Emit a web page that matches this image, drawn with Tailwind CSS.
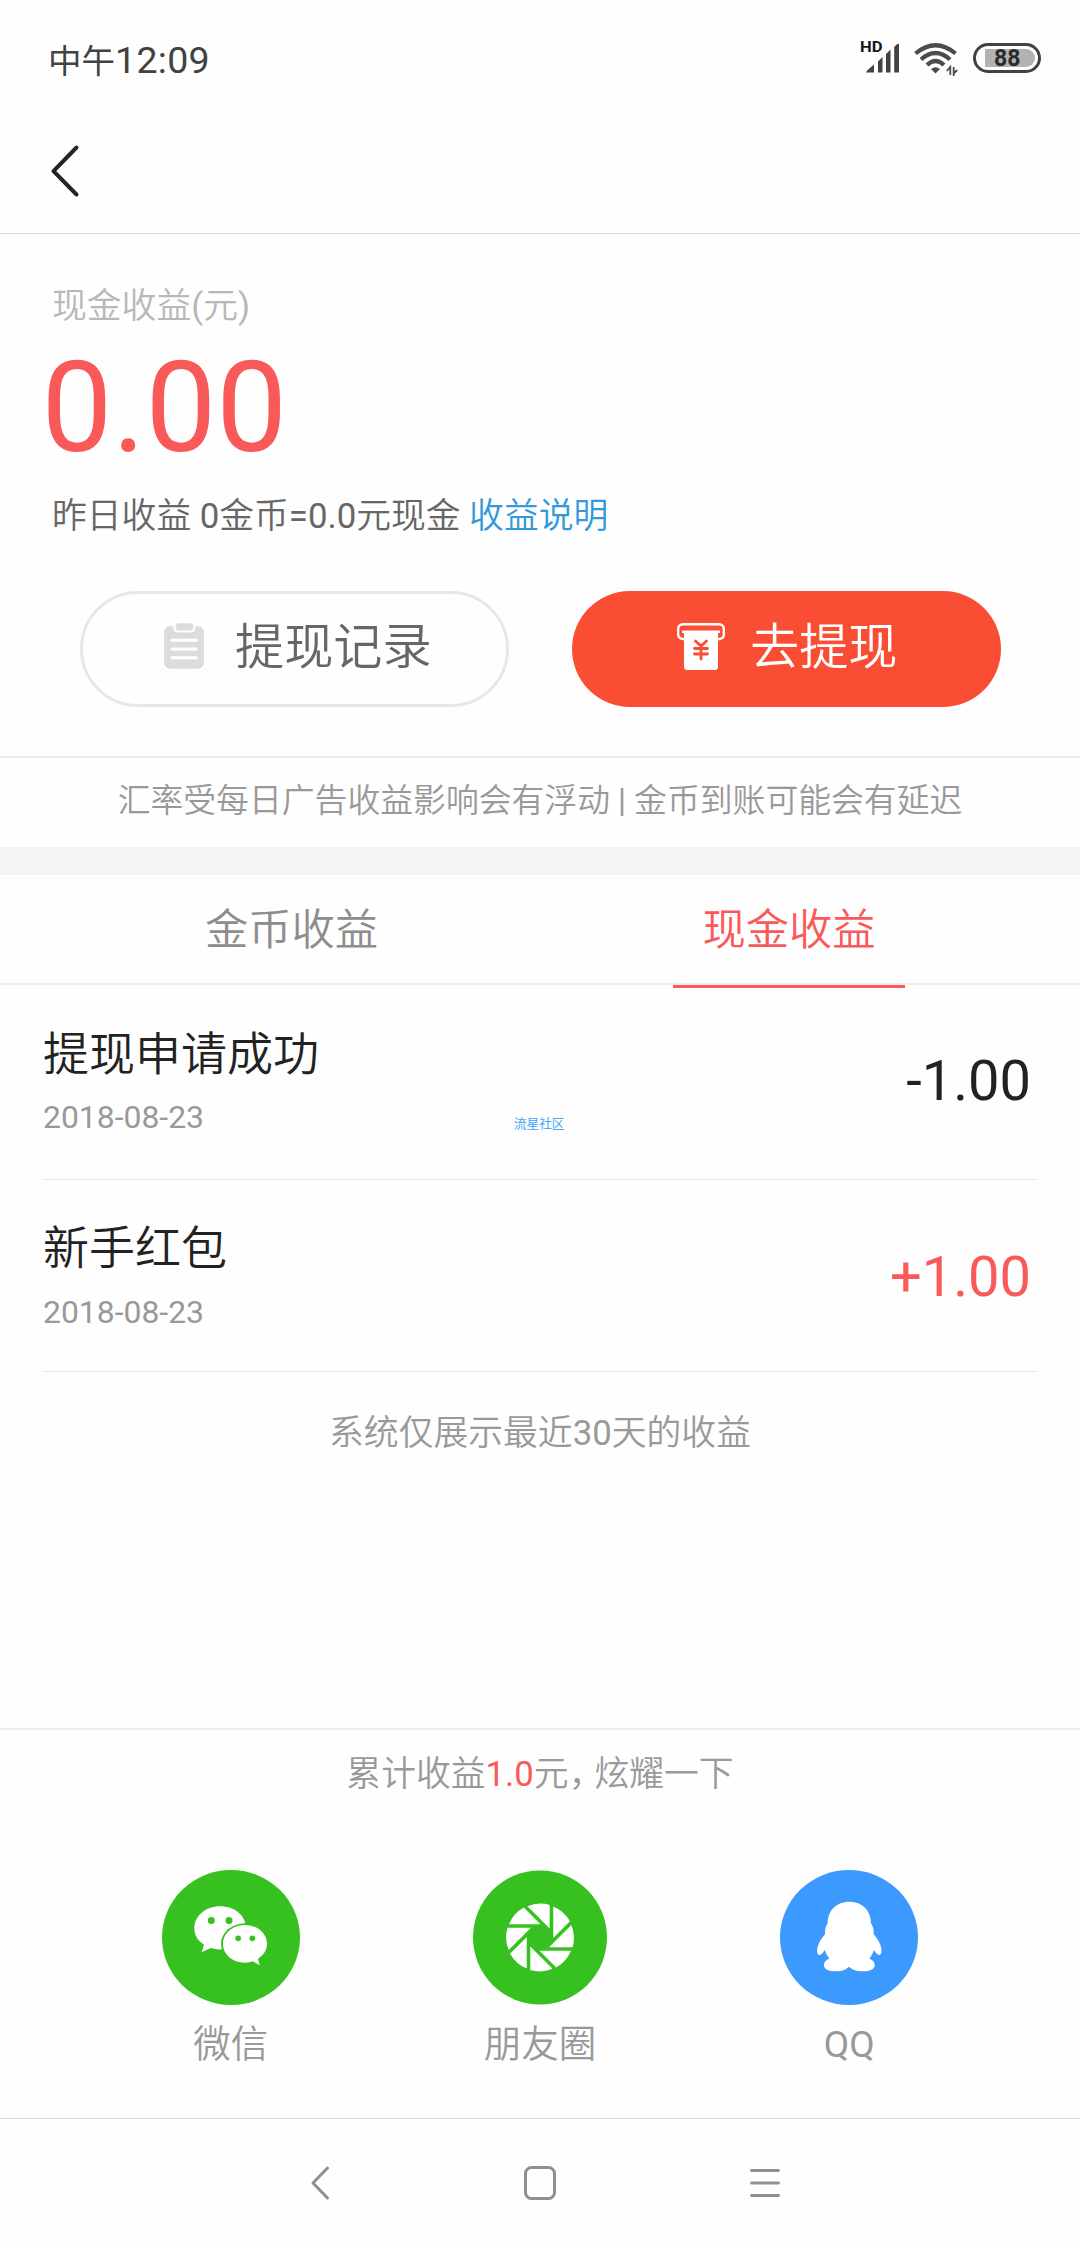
<!DOCTYPE html>
<html lang="zh-CN">
<head>
<meta charset="utf-8">
<title>现金收益</title>
<script src="https://cdn.jsdelivr.net/npm/@tailwindcss/browser@4"></script>
</head>
<body class="bg-[#fefefe]">
<div class="relative flex h-[2248px] w-[1080px] flex-col overflow-hidden bg-[#fefefe] font-[Roboto,'Noto_Sans_CJK_SC',sans-serif] font-[350] whitespace-nowrap text-[#999]">

  <!-- Status bar -->
  <div class="flex h-[118px] shrink-0 items-center justify-between pr-[39px] pl-12 font-normal text-[#424242]">
    <div class="pt-0.5 text-[37.500px] tracking-[0.300px]"><span class="text-[33.500px] tracking-normal">中午</span>12:09</div>
    <div class="flex items-center pb-0.5">
      <svg class="h-[40px] w-[44px]" viewBox="-2 0 44 40" fill="#424242">
        <text x="-1" y="14" font-size="15.500" font-weight="700" textLength="22.500" lengthAdjust="spacingAndGlyphs" fill="#151515">HD</text>
        <path d="M5 34.500Q5 33 13 26.500V34.500ZM17 23.500l4.500-4.500V34.500H17ZM25 16l4.500-4.500V34.500H25ZM33.200 9q2.400-3.500 4.800-3.500V34.500H33.200Z"/>
      </svg>
      <svg class="ml-[11px] h-[36px] w-[46px]" viewBox="0 2 46 36" fill="none" stroke="#4c4c4c" stroke-width="4.200">
        <path d="M1.500 15.500Q21.500-1 41.500 15.500"/>
        <path d="M7 21.500Q21.500 8.500 36 21.500"/>
        <path d="M13 27Q21.500 19 30 27"/>
        <path d="M17 31q4.500-3.500 9 0l-4.500 4.500z" fill="#4c4c4c" stroke="none"/>
        <path d="M36.300 37V29l-3.500 4M39.700 29v9M39.700 35.500l3.500-3.500" stroke-width="1.800"/>
      </svg>
      <div class="ml-[13px] flex h-[30px] w-[68px] items-center justify-end rounded-full border-[3px] border-[#424242] pr-[3px]">
        <div class="flex h-[18px] w-[50px] items-center rounded-l-[2px] rounded-r-full bg-[#b2b2b2] pl-[9px] text-[23px] leading-none font-bold text-[#2b2b2b]">88</div>
      </div>
    </div>
  </div>

  <!-- Title bar -->
  <div class="flex h-[116px] shrink-0 items-center border-b border-[#d8d8d8] pb-[9px] pl-[49px]">
    <svg class="h-[54px] w-[32px]" viewBox="0 0 32 54" fill="none" stroke="#232323" stroke-width="4" stroke-linecap="round" stroke-linejoin="round"><path d="M27.500 3.500L4.500 27.200L27.500 50.500"/></svg>
  </div>

  <!-- Balance -->
  <div class="flex h-[522px] shrink-0 flex-col pt-[52px]">
    <div class="pl-[52px] text-[34.800px] leading-10 text-[#b8b8b8]"><span>现金收益</span><span class="font-normal">(</span>元<span class="font-normal">)</span></div>
    <div class="mt-[32px] pl-[41.500px] text-[126px] leading-[100px] font-normal text-[#f95a59]">0.00</div>
    <div class="mt-[38px] pl-[52px] text-[34.800px] leading-10 text-[#666]">昨日收益 <span class="font-normal">0</span>金币<span class="font-normal">=0.0</span>元现金 <span class="text-[#3498db]">收益说明</span></div>
    <div class="mt-[55px] flex gap-[63px] pl-20">
      <button class="flex h-[116px] w-[429px] items-center rounded-full border-[3px] border-[#e7e7e7] pb-1.5 pl-[81px] text-[49.200px] font-[350] text-[#666]">
        <svg class="h-[46px] w-[40px]" viewBox="313 158 120 137">
          <rect x="313" y="167" width="120" height="128" rx="18" fill="#dcdcdc"/>
          <rect x="341" y="150" width="66" height="36" rx="14" fill="#fefefe"/>
          <rect x="348" y="158" width="53" height="22" rx="9" fill="#dcdcdc"/>
          <path d="M337 209h73M337 235.500h73M337 261.500h73" stroke="#fff" stroke-width="9" stroke-linecap="round"/>
        </svg>
        <span class="ml-[31px] pt-1">提现记录</span>
      </button>
      <button class="flex h-[116px] w-[429px] items-center rounded-full bg-[#f94d34] pb-1.5 pl-[105px] text-[49.200px] font-[350] text-white">
        <svg class="h-[47px] w-[48px]" viewBox="0 0 48 47">
          <rect x="1.200" y="1.200" width="45.600" height="14.800" rx="4.500" fill="none" stroke="#fff" stroke-width="2.400"/>
          <path d="M7 9.500H41V17.500H7Z" fill="#f94d34"/>
          <path d="M5 7.500H43V10H41V43.500Q41 47 37.500 47H10.500Q7 47 7 43.500V10H5Z" fill="#fff"/>
          <path d="M18.500 18L24 23L29.500 18M17.500 25.500H30.500M17.500 31H30.500M24 24V36" fill="none" stroke="#f94d34" stroke-width="2.800" stroke-linecap="round"/>
        </svg>
        <span class="ml-[25px] pt-1">去提现</span>
      </button>
    </div>
  </div>

  <!-- Notice -->
  <div class="flex h-[91px] shrink-0 items-center justify-center border-t-2 border-[#ebebeb] pb-0.5 text-[32.850px]"><span>汇率受每日广告收益影响会有浮动 <span class="font-normal">|</span> 金币到账可能会有延迟</span></div>
  <div class="h-7 shrink-0 bg-[#f3f4f6]"></div>

  <!-- Tabs -->
  <div class="flex h-[110px] shrink-0 border-b-2 border-[#ededed] text-[43.300px]">
    <div class="flex w-[583px] items-center justify-center pt-1 text-[#8d8d8d]">金币收益</div>
    <div class="relative ml-[90px] flex w-[232px] items-center justify-center pt-1 text-[#f95a59]">现金收益
      <div class="absolute -bottom-[5px] left-0 h-[3px] w-full bg-[#f95a59]"></div>
    </div>
  </div>

  <!-- Records -->
  <div class="ml-[43px] flex w-[994px] shrink-0 flex-col">
    <div class="relative flex h-[195px] items-center justify-between border-b border-[#e4e4e4] pr-[6px]">
      <div class="pt-[7px]">
        <div class="text-[46px] leading-[60px] text-[#222]">提现申请成功</div>
        <div class="mt-[3px] text-[31.900px] leading-[60px] font-normal">2018-08-23</div>
      </div>
      <div class="pb-[3px] text-[56px] font-normal text-[#222]">-1.00</div>
      <div class="absolute top-[131px] left-[471px] text-[12.600px] leading-4 font-normal text-[#42a5f5]">流星社区</div>
    </div>
    <div class="flex h-[192px] items-center justify-between border-b border-[#e8e8e8] pr-[6px]">
      <div class="pt-[8px]">
        <div class="text-[46px] leading-[60px] text-[#222]">新手红包</div>
        <div class="mt-[4px] text-[31.900px] leading-[60px] font-normal">2018-08-23</div>
      </div>
      <div class="pt-[2px] text-[56px] font-normal text-[#f95a59]">+1.00</div>
    </div>
  </div>
  <div class="mt-[41px] text-center text-[34.800px] leading-10">系统仅展示最近<span class="font-normal">30</span>天的收益</div>

  <!-- Share -->
  <div class="mt-auto flex h-[390px] shrink-0 flex-col border-t-2 border-[#ebebeb] pt-[24px]">
    <div class="text-center text-[34.800px] leading-10">累计收益<span class="font-normal text-[#f95a59]">1.0</span>元<span class="tracking-[-9px]">，</span>炫耀一下</div>
    <div class="mt-[76px] grid grid-cols-3 px-[76px] text-[37.500px]">
      <div class="flex flex-col items-center">
        <svg class="h-[135px] w-[138px]" viewBox="66 90 414 405">
          <ellipse cx="273" cy="292.500" rx="207" ry="202.500" fill="#37c120"/>
          <path d="M240 199C197 199 163 228 163 265C163 286 174 303 192 314L185 337L212 324Q228 329 245 328L320 270C318 225 283 199 240 199Z" fill="#fff"/>
          <ellipse cx="314" cy="311" rx="71" ry="61" fill="#37c120"/>
          <path d="M315 255C278 255 249 280 249 312C249 344 278 368 315 368Q328 368 339 364L359 376L354 356C371 345 381 330 381 312C381 280 352 255 315 255Z" fill="#fff"/>
          <g fill="#37c120"><circle cx="214" cy="241.500" r="10.500"/><circle cx="267" cy="241.500" r="10.500"/><circle cx="294.500" cy="295" r="8.500"/><circle cx="337" cy="295" r="8.500"/></g>
        </svg>
        <div class="mt-[19px] leading-10">微信</div>
      </div>
      <div class="flex flex-col items-center">
        <svg class="h-[135px] w-[134px]" viewBox="-67 -67.500 134 135">
          <defs><path id="blade" d="M9.700-9L-12.600-31.300A34 34 0 0 1 9.700-32.600Z"/></defs>
          <circle r="67" fill="#37c120"/>
          <g fill="#fff">
            <use href="#blade"/><use href="#blade" transform="rotate(45)"/><use href="#blade" transform="rotate(90)"/><use href="#blade" transform="rotate(135)"/>
            <use href="#blade" transform="rotate(180)"/><use href="#blade" transform="rotate(225)"/><use href="#blade" transform="rotate(270)"/><use href="#blade" transform="rotate(315)"/>
          </g>
        </svg>
        <div class="mt-[19px] leading-10">朋友圈</div>
      </div>
      <div class="flex flex-col items-center">
        <svg class="h-[135px] w-[138px]" viewBox="93 90 414 405">
          <ellipse cx="300" cy="292.500" rx="207" ry="202.500" fill="#3c99fd"/>
          <path fill="#fff" d="M301 185C262 185 236 212 236 250Q227 262 228 283C212 301 202 322 205 338Q207 347 213 345Q221 342 227 330Q231 344 241 356C229 360 225 368 225 376C225 389 240 394 259 394C280 394 292 388 300 380C308 388 321 394 342 394C362 394 377 389 377 376C377 368 373 360 361 356Q371 344 375 330Q381 342 389 345Q395 347 397 338C400 322 390 301 374 283Q375 262 366 250C366 212 340 185 301 185Z"/>
        </svg>
        <div class="mt-[20px] text-[37px] leading-10 font-normal">QQ</div>
      </div>
    </div>
  </div>

  <!-- System navigation -->
  <div class="flex h-[130px] shrink-0 items-center border-t border-[#e0e0e0] pb-[2px] pl-[309px]">
    <svg class="h-[36px] w-[22px]" viewBox="0 0 22 36" fill="none" stroke="#8f8f8f" stroke-width="3" stroke-linecap="round" stroke-linejoin="round"><path d="M18.500 3L4 18L18.500 33"/></svg>
    <svg class="ml-[193px] h-[36px] w-[32px]" viewBox="0 0 32 36" fill="none" stroke="#8f8f8f" stroke-width="3"><rect x="1.500" y="2.500" width="29" height="31" rx="6"/></svg>
    <svg class="ml-[194px] h-[30px] w-[30px]" viewBox="0 0 30 30" fill="none" stroke="#8f8f8f" stroke-width="2.800" stroke-linecap="round"><path d="M1.500 2.500H28.500M1.500 15H28.500M1.500 27.500H28.500"/></svg>
  </div>
</div>
</body>
</html>
